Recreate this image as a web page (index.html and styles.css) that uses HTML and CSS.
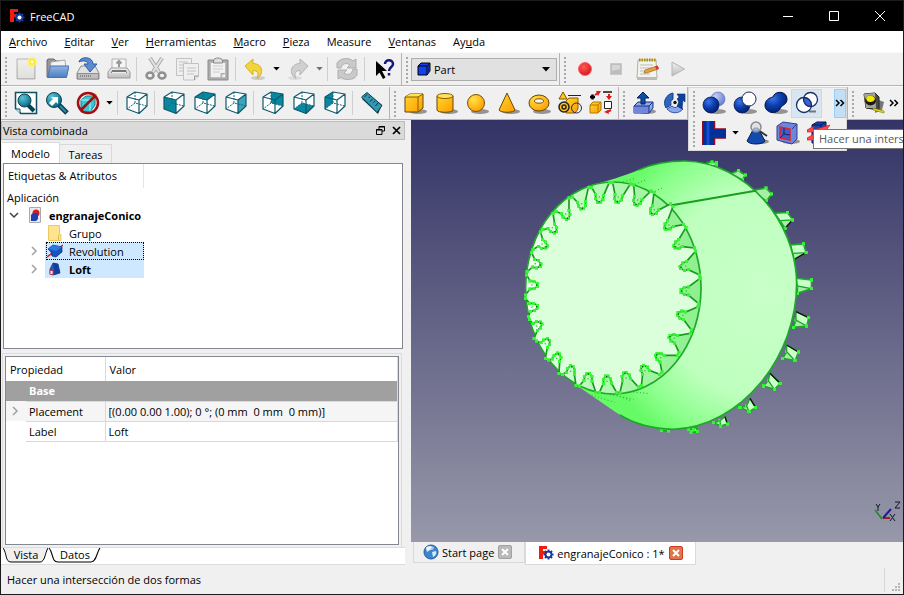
FILE: index.html
```html
<!DOCTYPE html>
<html lang="es">

<head>
    <meta charset="UTF-8">
    <meta name="viewport" content="width=device-width, initial-scale=1.0">
    <title>FreeCAD</title>
    <link rel="stylesheet" href="styles.css">
</head>

<body>

    <!-- shared icon shapes and gradients -->
    <svg class="defs" width="0" height="0" aria-hidden="true">
        <defs>
            <radialGradient id="blue-ball" cx="35%" cy="30%" r="75%">
                <stop offset="0" stop-color="#3f74ea"/><stop offset="0.5" stop-color="#0b3fae"/><stop offset="1" stop-color="#001c6c"/>
            </radialGradient>
            <radialGradient id="pale-ball" cx="35%" cy="30%" r="75%">
                <stop offset="0" stop-color="#c3d0f8"/><stop offset="1" stop-color="#6478cc"/>
            </radialGradient>
            <radialGradient id="gold-ball" cx="35%" cy="30%" r="75%">
                <stop offset="0" stop-color="#ffe14a"/><stop offset="1" stop-color="#ff9f00"/>
            </radialGradient>
            <radialGradient id="teal-ball" cx="35%" cy="30%" r="75%">
                <stop offset="0" stop-color="#5cc4dc"/><stop offset="1" stop-color="#04667e"/>
            </radialGradient>
            <radialGradient id="red-ball" cx="40%" cy="35%" r="70%">
                <stop offset="0" stop-color="#ff5a5a"/><stop offset="1" stop-color="#d80f18"/>
            </radialGradient>
            <linearGradient id="gold" x1="0" x2="1" y1="0" y2="1">
                <stop offset="0" stop-color="#ffd52e"/><stop offset="1" stop-color="#ff9d00"/>
            </linearGradient>
            <linearGradient id="grey" x1="0" x2="0" y1="0" y2="1">
                <stop offset="0" stop-color="#f2f2f2"/><stop offset="1" stop-color="#bcbcbc"/>
            </linearGradient>
            <linearGradient id="folder" x1="0" x2="0" y1="0" y2="1">
                <stop offset="0" stop-color="#8fb4e2"/><stop offset="1" stop-color="#4d7fc0"/>
            </linearGradient>
            <symbol id="logo" viewBox="0 0 16 16">
                <path d="M1 1h8v3H5v2h3v3H5v5H1z" fill="#f01c10"/>
                <g fill="#16399c"><circle cx="10.5" cy="9.500" r="3.8"/><path d="M9.500 4.500h2v10h-2zM5.500 8.500h10v2h-10z"/><path d="M9.500 4.500h2v10h-2zM5.500 8.500h10v2h-10z" transform="rotate(45 10.500 9.500)"/></g>
                <circle class="hub" cx="10.500" cy="9.500" r="2"/>
            </symbol>
            <symbol id="wire" viewBox="0 0 24 24">
                <path d="M10 1v11l12 3M10 12L2 18" fill="none" stroke="#17697b" stroke-dasharray="2 1"/>
                <path d="M2 6l12 3v13.500L2 18zM2 6l8-5 12 2-8 6M22 3v12l-8 7.500" fill="none" stroke="#0c5a6c" stroke-width="1.200" stroke-linejoin="round"/>
            </symbol>
            <symbol id="arrow" viewBox="0 0 8 5"><path d="M0 0h8L4 4.500z"/></symbol>
            <symbol id="more" viewBox="0 0 10 8"><path d="M1 1l3 3-3 3M5.500 1l3 3-3 3" fill="none" stroke="#000" stroke-width="1.500"/></symbol>
            <symbol id="shade" viewBox="0 0 24 24"><ellipse cx="15" cy="20.500" rx="9" ry="2.500" fill="#555" opacity="0.6"/></symbol>
        </defs>
    </svg>

    <div class="window">
        <header class="titlebar">
            <svg class="app-logo"><use href="#logo"/></svg>
            <h1 class="app-name">FreeCAD</h1>
            <button class="win-btn" aria-label="Minimizar"><svg viewBox="0 0 10 10"><path d="M0 5.500h10"/></svg></button>
            <button class="win-btn" aria-label="Maximizar"><svg viewBox="0 0 10 10"><path d="M.5.500h9v9h-9z"/></svg></button>
            <button class="win-btn" aria-label="Cerrar"><svg viewBox="0 0 10 10"><path d="M0 0l10 10M10 0L0 10"/></svg></button>
        </header>

        <nav class="menubar">
            <a href="#"><u>A</u>rchivo</a>
            <a href="#"><u>E</u>ditar</a>
            <a href="#"><u>V</u>er</a>
            <a href="#"><u>H</u>erramientas</a>
            <a href="#"><u>M</u>acro</a>
            <a href="#"><u>P</u>ieza</a>
            <a href="#">Measure</a>
            <a href="#"><u>V</u>entanas</a>
            <a href="#">Ay<u>u</u>da</a>
        </nav>

        <!-- file, workbench and macro toolbars -->
        <div class="toolbar-row">
            <div class="toolbar">
                <span class="handle"></span>
                <button class="tool" aria-label="Nuevo"><svg viewBox="0 0 24 24"><path d="M3 2h18v20H3z" fill="url(#grey)" stroke="#b5b5b0"/><path d="M4 3h16v18H4z" fill="#eeeeea" opacity=".7"/><circle cx="18" cy="5" r="5" fill="#fff36a" opacity=".7"/><circle cx="18" cy="5" r="3" fill="#ffee20"/><circle cx="18" cy="5" r="1.300" fill="#fff"/></svg></button>
                <button class="tool" aria-label="Abrir"><svg viewBox="0 0 24 24"><path d="M2 20V3l1-1h6l2 2h8v16z" fill="#969696" stroke="#6e6e6e"/><path d="M6 5l14-2 1 9H5z" fill="#f3f3f3" stroke="#aaa"/><path d="M5.500 9H24l-2.500 11.500H2.500z" fill="url(#folder)" stroke="#4473b2"/></svg></button>
                <button class="tool" aria-label="Guardar"><svg viewBox="0 0 24 24"><path d="M5 9h14l4 7v6H1v-6z" fill="#e2e2e2" stroke="#8d8d8d"/><path d="M1.500 16.500h21v5.500h-21z" fill="#bfbfbf" stroke="#8d8d8d"/><path d="M4 19h12" stroke="#888" stroke-width="2" stroke-dasharray="1 1"/><path d="M3 5c1-6 14-6 14 2h4l-7 8-6-8h4c0-3-5-4-9-2z" fill="#5b8bd0" stroke="#33609f"/></svg></button>
                <button class="tool" aria-label="Imprimir"><svg viewBox="0 0 24 24"><path d="M5 12V2h14v10z" fill="#f5f5f5" stroke="#b2b2b2"/><path d="M12 4v6M9.500 6.500L12 4l2.500 2.500" fill="none" stroke="#999" stroke-width="2"/><path d="M4 11h16l3 4v6H1v-6z" fill="url(#grey)" stroke="#999"/><path d="M5 13h14l1 3H4z" fill="#777"/><path d="M5 15.500h14" stroke="#eee"/></svg></button>
                <span class="sep"></span>
                <button class="tool" aria-label="Cortar"><svg viewBox="0 0 24 24"><path d="M6 1l9 14M18 1L9 15" stroke="#aaa" stroke-width="4"/><path d="M6 1l9 14M18 1L9 15" stroke="#e2e2e2" stroke-width="2"/><g fill="none" stroke="#8f8f8f" stroke-width="2.500"><ellipse cx="6" cy="18.500" rx="3.500" ry="3"/><ellipse cx="18" cy="18.500" rx="3.500" ry="3"/></g></svg></button>
                <button class="tool" aria-label="Copiar"><svg viewBox="0 0 24 24"><g fill="#efefef" stroke="#c2c2c2"><path d="M1.500 1.500h15v17h-15z"/><path d="M4 5h9M4 8h4M4 11h4M4 14h4"/><path d="M8.500 6.500h15V19l-4 4h-11z"/><path d="M12 11h9M12 14h9M12 17h7"/></g><path d="M19.500 23v-4h4" fill="#ddd" stroke="#999"/></svg></button>
                <button class="tool" aria-label="Pegar"><svg viewBox="0 0 24 24"><path d="M2 3h20v20H2z" fill="#aaa" stroke="#8c8c8c"/><path d="M4.500 5.500h15v15h-15z" fill="#f1f1f1" stroke="#bbb"/><path d="M7 9h10M7 12h10M7 15h7" stroke="#ccc"/><path d="M7.500 4c0-4 9-4 9 0v2h-9z" fill="#ddd" stroke="#888"/><path d="M15 20.500v-4h4" fill="#ccc" stroke="#aaa"/></svg></button>
                <span class="sep"></span>
                <button class="tool" aria-label="Deshacer"><svg viewBox="0 0 24 24"><ellipse cx="15" cy="21" rx="7" ry="2" fill="#ccc"/><path d="M2 9l8-7v4.500c9 0 12 10 4 15 2-5 1-8-4-8V18z" fill="#f3d43c" stroke="#d6b21a"/></svg></button>
                <button class="drop" aria-label="Lista de deshacer"><svg><use href="#arrow"/></svg></button>
                <button class="tool" aria-label="Rehacer"><svg viewBox="0 0 24 24"><ellipse cx="9" cy="21" rx="7" ry="2" fill="#ddd"/><path d="M22 9l-8-7v4.500c-9 0-12 10-4 15-2-5-1-8 4-8V18z" fill="#d0d0d0" stroke="#b4b4b4"/></svg></button>
                <button class="drop off" aria-label="Lista de rehacer"><svg><use href="#arrow"/></svg></button>
                <span class="sep"></span>
                <button class="tool" aria-label="Refrescar"><svg viewBox="0 0 24 24"><ellipse cx="12" cy="21.500" rx="9" ry="1.500" fill="#ddd"/><path d="M2 11V6c3-5 12-6 16-2l3-2v9h-9l3-3c-4-3-8-1-9 3zM22 12v6c-3 5-12 6-16 2l-3 2v-9h9l-3 3c4 3 8 1 9-4z" fill="#cacaca" stroke="#afafaf"/></svg></button>
                <span class="sep"></span>
                <button class="tool" aria-label="¿Qué es esto?"><svg viewBox="0 0 24 24"><path d="M4 4v15l3.500-3.500L11 22l2.500-1.500L10 14h5z"/><path d="M13 7c0-5 8-5 8 0 0 3-4 3-4 7M17 16v2.500" fill="none" stroke="#15157f" stroke-width="2.500"/></svg></button>
            </div>
            <div class="toolbar">
                <span class="handle"></span>
                <label class="workbench">
                    <svg viewBox="0 0 14 14"><path d="M1 4l3-3h9v8l-3 4H1z" fill="#1540f0" stroke="#000"/><path d="M1 4h9v9M10 4l3-3" fill="none" stroke="#000"/><path d="M10 4l3-3v8l-3 4z" fill="#0a249c"/></svg>
                    <select aria-label="Banco de trabajo"><option>Part</option><option>Draft</option></select>
                    <svg class="caret"><use href="#arrow"/></svg>
                </label>
            </div>
            <div class="toolbar wide">
                <span class="handle"></span>
                <button class="tool" aria-label="Grabar macro"><svg viewBox="0 0 24 24"><circle cx="12" cy="12" r="6.500" fill="url(#red-ball)" stroke="#f66"/></svg></button>
                <button class="tool" aria-label="Detener macro"><svg viewBox="0 0 24 24"><path d="M6.500 6.500h11v11h-11z" fill="#bdbdbd" stroke="#c8c8c8"/><path d="M8 8h8v4l-8 2z" fill="#d6d6d6"/></svg></button>
                <button class="tool" aria-label="Macros"><svg viewBox="0 0 24 24"><path d="M3 3h18l1 18H2z" fill="#f4f4ee" stroke="#b0b0a4"/><path d="M2 20h20v3H2z" fill="#bbb"/><path d="M4 3h17" stroke="#a58f12" stroke-width="3" stroke-dasharray="1.500 1"/><path d="M5 8h13M5 11h12M5 14h7M5 17h10" stroke="#bbb"/><path d="M9 16l1-3 12-4 1.500 3-12 4z" fill="#e9a040" stroke="#9d6a20" stroke-width=".7"/><path d="M20 9.500l2.500-1 1.500 3-2.500 1z" fill="#d33"/></svg></button>
                <button class="tool" aria-label="Ejecutar macro"><svg viewBox="0 0 24 24"><path d="M6 5l12.500 7L6 19z" fill="url(#grey)" stroke="#b4b4b4"/></svg></button>
            </div>
        </div>

        <!-- view, solids and part tools -->
        <div class="toolbar-row">
            <div class="toolbar">
                <span class="handle"></span>
                <button class="tool" aria-label="Ajustar todo"><svg viewBox="0 0 24 24"><path d="M1.500 1.500h21v21H7l-5.500-5z" fill="#fff" stroke="#0c5162" stroke-width="1.500"/><path d="M1.500 18H6v4.500" fill="#cde" stroke="#0c5162"/><path d="M14 14l6 6" stroke="#064455" stroke-width="4"/><circle cx="10.500" cy="9.500" r="6.500" fill="url(#teal-ball)" stroke="#064455"/></svg></button>
                <button class="tool" aria-label="Ajustar selección"><svg viewBox="0 0 24 24"><path d="M14 14l8 8" stroke="#064455" stroke-width="5"/><path d="M15 15l6 6" stroke="#2b8ca4" stroke-width="2"/><circle cx="9" cy="9" r="7.500" fill="url(#teal-ball)" stroke="#064455"/><path d="M4 12l4-4-2-2h7v7l-2-2-4 4z" fill="#fff"/></svg></button>
                <button class="tool" aria-label="Estilo de dibujo"><svg viewBox="0 0 24 24"><path d="M5 9l5-4h9v9l-5 7H5z" fill="#38c8d4" stroke="#15808c"/><path d="M5 9h9v12M14 9l5-4" fill="none" stroke="#9ff"/><path d="M16 8l4-5" stroke="#eebb22" stroke-width="3"/><circle cx="12" cy="12" r="10" fill="none" stroke="#a60c14" stroke-width="2.500"/><path d="M19 5L5 19" stroke="#a60c14" stroke-width="2.500"/></svg></button>
                <button class="drop" aria-label="Más estilos"><svg><use href="#arrow"/></svg></button>
                <span class="sep"></span>
                <button class="tool" aria-label="Axonométrica"><svg viewBox="0 0 24 24"><path d="M2 6l8-5 12 2v12l-8 7.500L2 18z" fill="#fff"/><use href="#wire"/></svg></button>
                <span class="sep"></span>
                <button class="tool" aria-label="Frontal"><svg viewBox="0 0 24 24"><path d="M2 6l8-5 12 2v12l-8 7.500L2 18z" fill="#fff"/><path d="M2 6l12 3v13.500L2 18z" fill="#0a87a0"/><use href="#wire"/></svg></button>
                <button class="tool" aria-label="Superior"><svg viewBox="0 0 24 24"><path d="M2 6l8-5 12 2v12l-8 7.500L2 18z" fill="#fff"/><path d="M2 6l8-5 12 2-8 6z" fill="#0a87a0"/><use href="#wire"/></svg></button>
                <button class="tool" aria-label="Derecha"><svg viewBox="0 0 24 24"><path d="M2 6l8-5 12 2v12l-8 7.500L2 18z" fill="#fff"/><path d="M14 9l8-6v12l-8 7.500z" fill="#3aa4ba"/><use href="#wire"/></svg></button>
                <span class="sep"></span>
                <button class="tool" aria-label="Posterior"><svg viewBox="0 0 24 24"><path d="M2 6l8-5 12 2v12l-8 7.500L2 18z" fill="#fff"/><path d="M10 1l12 2v12l-12-3z" fill="#0a87a0"/><use href="#wire"/></svg></button>
                <button class="tool" aria-label="Inferior"><svg viewBox="0 0 24 24"><path d="M2 6l8-5 12 2v12l-8 7.500L2 18z" fill="#fff"/><path d="M2 18l8-6 12 3-8 7.500z" fill="#0a87a0"/><use href="#wire"/></svg></button>
                <button class="tool" aria-label="Izquierda"><svg viewBox="0 0 24 24"><path d="M2 6l8-5 12 2v12l-8 7.500L2 18z" fill="#fff"/><path d="M2 6l8-5v11l-8 6z" fill="#0a87a0"/><use href="#wire"/></svg></button>
                <span class="sep"></span>
                <button class="tool" aria-label="Medir distancia"><svg viewBox="0 0 24 24"><path d="M2 8l5-6 15 12-4 9z" fill="#12313a"/><path d="M1.500 6L7 1.500l15 13-5 7z" fill="#3596b0" stroke="#0d4758"/><path d="M7 3.500L4.500 6M10 5.500L8.500 7M12.500 8L10 10.500M15 10l-1.500 1.500M18 12l-2.500 3" stroke="#06303c"/></svg></button>
            </div>
            <div class="toolbar">
                <span class="handle"></span>
                <button class="tool" aria-label="Cubo"><svg viewBox="0 0 24 24"><use href="#shade"/><path d="M2 6l5-3h13v14l-5 4H2z" fill="url(#gold)" stroke="#6b4700"/><path d="M2 6l5-3h13l-5 3z" fill="#ffe25c"/><path d="M2 6h13v15M15 6l5-3" fill="none" stroke="#8a5c00"/></svg></button>
                <button class="tool" aria-label="Cilindro"><svg viewBox="0 0 24 24"><use href="#shade"/><path d="M3 5v14c0 3 16 3 16 0V5z" fill="url(#gold)" stroke="#6b4700"/><ellipse cx="11" cy="5" rx="8" ry="2.500" fill="#ffe25c" stroke="#8a5c00"/></svg></button>
                <button class="tool" aria-label="Esfera"><svg viewBox="0 0 24 24"><use href="#shade"/><circle cx="11" cy="12" r="8.500" fill="url(#gold-ball)" stroke="#7d5300"/></svg></button>
                <button class="tool" aria-label="Cono"><svg viewBox="0 0 24 24"><use href="#shade"/><path d="M11 2L3 19c1 3 15 3 16 0z" fill="url(#gold)" stroke="#6b4700"/></svg></button>
                <button class="tool" aria-label="Toro"><svg viewBox="0 0 24 24"><use href="#shade"/><ellipse cx="12" cy="12" rx="10" ry="8" fill="url(#gold-ball)" stroke="#6b4700"/><ellipse cx="12" cy="10" rx="4.500" ry="2.200" fill="#f3f3f3" stroke="#7d5300"/></svg></button>
                <button class="tool" aria-label="Crear primitivas"><svg viewBox="0 0 24 24"><path d="M8 10l3-3h9v11l-3 4H8z" fill="url(#gold)" stroke="#8a5c00"/><path d="M5 1L1 8h8z" fill="#ffc61a" stroke="#7d5300"/><path d="M10 4.500h13" stroke="#222"/><circle cx="6" cy="16" r="5" fill="#ffc61a" stroke="#222" stroke-width="1.500"/><circle cx="6" cy="16" r="2" fill="none" stroke="#222" stroke-width="1.500"/><circle cx="18.500" cy="17" r="5" fill="none" stroke="#23235c"/></svg></button>
                <button class="tool" aria-label="Constructor de formas"><svg viewBox="0 0 24 24"><path d="M1 14l3-3h8v8l-3 3H1z" fill="url(#gold)" stroke="#b07a00"/><path d="M1 14h8v8M9 14l3-3" fill="none" stroke="#b07a00"/><path d="M1 6h5M3.500 3.500v5" stroke="#000" stroke-width="2.500"/><path d="M6 4l3-2" stroke="#e01818" stroke-width="2"/><path d="M7 0h5l-3 5z" fill="#e01818"/><path d="M14 1h9" stroke="#111" stroke-width="1.500"/><path d="M20 3v3" stroke="#e01818" stroke-width="2"/><path d="M17 5h6l-3 4z" fill="#e01818"/><path d="M15.500 10.500h7v7h-7z" fill="#fff" stroke="#222"/><path d="M22 19l-4 2" stroke="#e01818" stroke-width="2"/><path d="M15 21l4-2 1 4z" fill="#e01818"/></svg></button>
            </div>
            <div class="toolbar cut">
                <span class="handle"></span>
                <button class="tool" aria-label="Extrusión"><svg viewBox="0 0 24 24"><use href="#shade"/><path d="M2 15l4-4h15v6l-4 5H2z" fill="#90a6ee" stroke="#1a2f86"/><path d="M2 15h15v7H2z" fill="#7088dc"/><path d="M2 15h15v7M17 15l4-4" fill="none" stroke="#1a2f86"/><path d="M11 1l6 6h-4v6H9V7H5z" fill="#0d4ea8" stroke="#03215f"/></svg></button>
                <button class="tool" aria-label="Revolución"><svg viewBox="0 0 24 24"><path d="M10 2A10 10 0 0 0 3 17l5-3a5 5 0 0 1 2-6z" fill="#2f66bd" stroke="#173c86"/><path d="M4 18c4 5 12 5 16 0l-5-3c-2 2-4 2-6 0z" fill="#8aa6ee" stroke="#3452a8"/><path d="M14 3h8v8l-2-2-1 9-5-3c2-3 2-5 0-7l2-2z" fill="#0b419c" stroke="#052a70" stroke-width=".6"/><circle cx="12" cy="11.500" r="1.700" fill="#111"/></svg></button>
            </div>
            <div class="toolbar slot">
                <!-- expanded boolean toolbar, floats above the 3D view -->
                <div class="popup">
                    <div class="popup-row">
                        <span class="handle"></span>
                        <button class="tool" aria-label="Booleana"><svg viewBox="0 0 24 24"><use href="#shade"/><circle cx="16" cy="8" r="7" fill="url(#pale-ball)" stroke="#6575b8" stroke-width=".7"/><circle cx="9" cy="14" r="8" fill="url(#blue-ball)" stroke="#00104a" stroke-width=".7"/></svg></button>
                        <button class="tool" aria-label="Cortar formas"><svg viewBox="0 0 24 24"><use href="#shade"/><circle cx="9" cy="14" r="8" fill="url(#blue-ball)" stroke="#00104a" stroke-width=".7"/><circle cx="16" cy="8" r="7" fill="#fff" stroke="#1c2a66"/></svg></button>
                        <button class="tool" aria-label="Unión"><svg viewBox="0 0 24 24"><use href="#shade"/><path d="M9 6C11-1 23 0 23 8c0 5-4 6-6 8-3 8-15 7-16-1 0-6 4-8 8-9z" fill="url(#blue-ball)" stroke="#00104a"/></svg></button>
                        <button class="tool active" aria-label="Intersección"><svg viewBox="0 0 24 24"><path d="M14 20.500h7" stroke="#777" stroke-width="2"/><circle cx="9" cy="14" r="7.500" fill="#fff"/><circle cx="15.500" cy="8.500" r="7" fill="#fff"/><path d="M8.600 7c4-1 7.500 2 7.700 8C12 16 8 13 8.600 7z" fill="#3365d8"/><circle cx="9" cy="14" r="7.500" fill="none" stroke="#1c2a66" stroke-width="1.300"/><circle cx="15.500" cy="8.500" r="7" fill="none" stroke="#1c2a66" stroke-width="1.300"/></svg></button>
                        <button class="extend on" aria-label="Más herramientas"><svg><use href="#more"/></svg></button>
                    </div>
                    <div class="popup-row">
                        <span class="handle"></span>
                        <button class="tool" aria-label="Unir objetos"><svg viewBox="0 0 24 24"><path d="M0 0h13v8h11v9H13v7H0z" fill="#00309a"/><path d="M6 0v24" stroke="#1450d0" stroke-width="3"/><path d="M.7 0v24M12.500 0v8H24M12.500 24v-7H24" fill="none" stroke="#8c0d24" stroke-width="1.500"/></svg></button>
                        <button class="drop" aria-label="Más uniones"><svg><use href="#arrow"/></svg></button>
                        <button class="tool" aria-label="Comprobar geometría"><svg viewBox="0 0 24 24"><use href="#shade"/><path d="M9 7L2 20c2 4 16 4 18 0L13 7z" fill="#124bb0" stroke="#041f55"/><path d="M13 9l9 6" stroke="#333" stroke-width="2"/><circle cx="11" cy="6" r="5" fill="#d7dde6" fill-opacity=".7" stroke="#8a8a8a" stroke-width="1.500"/></svg></button>
                        <button class="tool" aria-label="Sección"><svg viewBox="0 0 24 24"><use href="#shade"/><path d="M1 5l6-4 14 2v15l-5 5-15-4z" fill="#6b86dc" stroke="#2b3f92"/><path d="M4 6l10 2v11L4 17z" fill="#3d5fc6" stroke="#e8202a" stroke-width="1.500"/><path d="M8 7v6l-4 4M8 13l6 1" fill="none" stroke="#15236b"/><path d="M16 8l5-5" stroke="#2b3f92"/></svg></button>
                        <button class="tool" aria-label="Secciones transversales"><svg viewBox="0 0 24 24"><path d="M5 4l5-3h9v17l-5 4H5z" fill="#1546b4" stroke="#03174d"/><path d="M5 4h9l5-3M14 4v18" fill="none" stroke="#03174d"/><path d="M0 9l7-4-1 4 17-5-5 7H0zM0 17l7-4-1 4 17-5-5 7H0z" fill="#ff4848" stroke="#d01010" stroke-width=".6"/></svg></button>
                    </div>
                    <div class="tooltip" role="tooltip">Hacer una intersección de dos formas</div>
                </div>
            </div>
            <div class="toolbar wide">
                <span class="handle"></span>
                <button class="tool" aria-label="Medir"><svg viewBox="0 0 24 24"><path d="M15 8l8 3-2 8-7 3z" fill="#777"/><path d="M3 3l11-1 4 4v13L5 17z" fill="#4a4a48" stroke="#222"/><path d="M3 3l11-1 1 15-10 0z" fill="#a6a69e"/><ellipse cx="9.500" cy="9.500" rx="5.500" ry="5" fill="#1a1a1a"/><path d="M5 7c2-4 8-3 9 1-1 3-5 4-8 2z" fill="#f5e800"/><path d="M12 17l11 3v2L12 19z" fill="#e7dc20" stroke="#807a00" stroke-width=".6"/></svg></button>
                <button class="extend" aria-label="Más medidas"><svg><use href="#more"/></svg></button>
            </div>
        </div>

        <main class="workspace">
            <section class="dock">
                <div class="dock-title">
                    <h2>Vista combinada</h2>
                    <button class="dock-btn" aria-label="Flotar"><svg viewBox="0 0 9 9"><path d="M3 3V.5h5.500V5H6M.5 3.500H6v5H.5zM3 1h6M0 4h6" fill="none" stroke="#000"/></svg></button>
                    <button class="dock-btn" aria-label="Cerrar panel"><svg viewBox="0 0 9 9"><path d="M1 1l7 7M8 1L1 8" stroke="#000" stroke-width="1.700"/></svg></button>
                </div>
                <div class="dock-tabs">
                    <button class="dock-tab current">Modelo</button>
                    <button class="dock-tab">Tareas</button>
                </div>
                <div class="tree-box">
                    <div class="tree-head">Etiquetas &amp; Atributos</div>
                    <ul class="tree">
                        <li>Aplicación</li>
                        <li class="level-1">
                            <svg class="twist open" viewBox="0 0 10 10"><path d="M1 3l4 4 4-4"/></svg>
                            <svg class="node-icon" viewBox="0 0 14 16"><path d="M1.500.500h11v15h-11z" fill="#e9e9ee" stroke="#a9a9b0"/><circle cx="8" cy="6" r="3.500" fill="#d81c24"/><path d="M3 8l2-2h5v6l-2 2H3z" fill="#1d3fb0"/></svg>
                            <b>engranajeConico</b>
                        </li>
                        <li class="level-2">
                            <span class="twist"></span>
                            <svg class="node-icon" viewBox="0 0 14 16"><path d="M.5.500h11v9h1.500v6H.5z" fill="#ffe38f" stroke="#ecc95e"/><path d="M10.500 15v-5" stroke="#e0b848"/></svg>
                            <span>Grupo</span>
                        </li>
                        <li class="level-2 selected focus">
                            <svg class="twist" viewBox="0 0 10 10"><path d="M3 1l4 4-4 4"/></svg>
                            <svg class="node-icon" viewBox="0 0 16 16"><path d="M0 14L16 2" stroke="#d02030" stroke-width="1.500"/><path d="M1 6l5-4 9 2v5l-6 5-4-1-1-4z" fill="#1553c0" stroke="#082a70" stroke-width=".7"/><path d="M1 6l5-4 9 2-6 4z" fill="#2f77dd"/></svg>
                            <span>Revolution</span>
                        </li>
                        <li class="level-2 selected">
                            <svg class="twist" viewBox="0 0 10 10"><path d="M3 1l4 4-4 4"/></svg>
                            <svg class="node-icon" viewBox="0 0 16 16"><path d="M3 8l3-6 5 1 2 9-7 2-3-1z" fill="#2459c4" stroke="#0c2c7a" stroke-width=".7"/><path d="M6 2l1 6v6l6-2-2-9z" fill="#123e9e"/><path d="M3 9.500h3v4H3z" fill="#dfe4f5" stroke="#c22838" stroke-width=".8"/></svg>
                            <b>Loft</b>
                        </li>
                    </ul>
                </div>
                <div class="props-pane">
                    <div class="props-box">
                        <table class="props">
                            <colgroup><col class="gutter-col"><col class="name-col"><col></colgroup>
                            <thead>
                                <tr><th colspan="2" scope="col">Propiedad</th><th scope="col">Valor</th></tr>
                            </thead>
                            <tbody>
                                <tr class="group"><td class="gutter"></td><th colspan="2">Base</th></tr>
                                <tr class="odd"><td class="gutter"><svg class="twist" viewBox="0 0 10 10"><path d="M3 1l4 4-4 4"/></svg></td><td>Placement</td><td>[(0.00 0.00 1.00); 0 °; (0 mm&nbsp; 0 mm&nbsp; 0 mm)]</td></tr>
                                <tr><td class="gutter"></td><td>Label</td><td>Loft</td></tr>
                            </tbody>
                        </table>
                    </div>
                </div>
                <div class="props-tabs">
                    <button class="slant"><svg viewBox="0 0 46 15" preserveAspectRatio="none"><path d="M0 0c4 5 2 14 8 14h29c5 0 5-9 8-14"/></svg><span>Vista</span></button>
                    <button class="slant current"><svg viewBox="0 0 46 15" preserveAspectRatio="none"><path d="M0 0c4 5 2 14 8 14h29c5 0 5-9 8-14"/></svg><span>Datos</span></button>
                </div>
            </section>

            <section class="viewer">
                <div class="view3d">
                    <svg id="gear" class="gear" viewBox="0 0 930 870" role="img" aria-label="Engranaje cónico">
                        <defs>
                            <radialGradient id="skin" gradientUnits="userSpaceOnUse" cx="760" cy="430" r="520">
                                <stop offset="0" stop-color="#c9ffc9"/><stop offset="0.6" stop-color="#beffbe"/><stop offset="0.85" stop-color="#8cff8c"/><stop offset="1" stop-color="#66fa66"/>
                            </radialGradient>
                            <linearGradient id="groove" x1="0" x2="1" y1="0" y2="0">
                                <stop offset="0" stop-color="#f4fff4"/><stop offset="0.4" stop-color="#b5f8b5"/><stop offset="1" stop-color="#8cf08c"/>
                            </linearGradient>
                            <marker id="dot" viewBox="0 0 8 8" refX="4" refY="4" markerWidth="10" markerHeight="10" markerUnits="userSpaceOnUse"><path d="M0 0h8v8H0z" fill="#35f535"/></marker>
                        </defs>
                        <g id="outer-teeth"></g>
                        <path d="M235 107C290 95 350 75 385 60C430 40 480 33 525 33C709 37 858 215 860 400C860 620 695 830 490 838C400 835 340 805 300 775L203 708z" fill="url(#skin)"/>
                        <path d="M385 60C430 40 480 33 525 33C709 37 858 215 860 400C860 620 695 830 490 838C420 836 370 820 330 795" fill="none" stroke="#1ea82a" stroke-width="5"/>
                        <path d="M485 166L737 122" stroke="#16a01e" stroke-width="6"/>
                        <path d="M330 98l42-12M375 103l32-14M435 124l26-12M245 735l68 22M300 734l70 14M360 725l60 6M320 735l40 16" stroke="#22b02c" stroke-width="3" stroke-dasharray="3 7"/>
                        <ellipse cx="310" cy="414" rx="263" ry="318" fill="url(#groove)" stroke="#1ea82a" stroke-width="5"/>
                        <g id="face"></g>
                    </svg>
                    <svg class="axes" viewBox="0 0 30 24" aria-hidden="true">
                        <g fill="none" stroke-width="1.500"><path d="M8 17l7 0" stroke="#a02020" stroke-width="2" transform="translate(4 0)"/><path d="M11 18L4 9" stroke="#1f8a2a"/><path d="M12 17L20 8" stroke="#1d1d96" stroke-width="2"/></g>
                        <g fill="none" stroke="#15152a"><path d="M5 3l2 3 2-3M7 6v4M24 1h5l-5 6h5M19 13l5 7M24 13l-5 7"/></g>
                    </svg>
                </div>
                <div class="doc-tabs">
                    <div class="doc-tab">
                        <svg class="doc-icon" viewBox="0 0 16 16"><circle cx="8" cy="8" r="7" fill="#3f86cf" stroke="#23599a"/><path d="M3 4c2-2 5-2 6-1L7 6 4 8zM9 8l4-1c1 3-1 5-3 6z" fill="#d8ecfb"/><ellipse cx="7" cy="4" rx="4" ry="2" fill="#fff" opacity=".5"/></svg>
                        <a href="#">Start page</a>
                        <button class="close" aria-label="Cerrar Start page"><svg viewBox="0 0 8 8"><path d="M1 1l6 6M7 1L1 7"/></svg></button>
                    </div>
                    <div class="doc-tab current">
                        <svg class="doc-icon"><use href="#logo"/></svg>
                        <a href="#">engranajeConico : 1*</a>
                        <button class="close" aria-label="Cerrar engranajeConico"><svg viewBox="0 0 8 8"><path d="M1 1l6 6M7 1L1 7"/></svg></button>
                    </div>
                </div>
            </section>
        </main>

        <footer class="statusbar">
            <span>Hacer una intersección de dos formas</span>
            <span class="status-sep"></span>
            <svg class="grip" viewBox="0 0 9 9"><path d="M6 0h2v2H6zM3 3h2v2H3zM6 3h2v2H6zM0 6h2v2H0zM3 6h2v2H3zM6 6h2v2H6z" fill="#b5b5b5"/></svg>
        </footer>
    </div>

    <script src="gear.js"></script>
</body>

</html>
```
FILE: styles.css
```css
* {
    margin: 0;
    padding: 0;
    box-sizing: border-box;
}

body {
    font-family: "Open Sans", "Noto Sans", sans-serif;
    font-size: 11px;
    color: #000;
    background-color: #f0f0f0;
}

button {
    font: inherit;
    color: inherit;
    background: none;
    border: none;
}

svg {
    display: block;
    flex-shrink: 0;
}

a {
    color: inherit;
    text-decoration: none;
}

.defs {
    position: absolute;
}

.hub {
    fill: #fff;
}

.window {
    display: flex;
    flex-direction: column;
    height: 100vh;
    border: 1px solid #1b1b1b;
    overflow: hidden;
}

/* title bar */
.titlebar {
    display: flex;
    align-items: center;
    height: 30px;
    padding-left: 8px;
    background-color: #000;
    color: #fff;
}

.titlebar .hub {
    fill: #000;
}

.app-logo {
    width: 16px;
    height: 16px;
    margin-right: 5px;
}

.app-name {
    flex: 1;
    font-size: 11px;
    font-weight: normal;
}

.win-btn {
    display: flex;
    align-items: center;
    justify-content: center;
    width: 46px;
    height: 30px;
}

.win-btn svg {
    width: 10px;
    height: 10px;
    fill: none;
    stroke: #fff;
}

.menubar {
    display: flex;
    align-items: center;
    gap: 17px;
    height: 21px;
    padding-left: 8px;
    background-color: #fff;
}

/* toolbars */
.toolbar-row {
    display: flex;
    height: 34px;
    border-top: 1px solid #fafafa;
    border-bottom: 1px solid #b4b4b4;
}

.toolbar {
    display: flex;
    align-items: center;
    padding-right: 2px;
    border-right: 1px solid #b4b4b4;
}

.toolbar.wide {
    flex: 1;
    border-right: none;
    padding-right: 0;
}

.toolbar.cut {
    width: 69px;
}

.toolbar.slot {
    position: relative;
    align-items: flex-start;
    width: 160px;
    padding: 0;
}

.handle {
    flex-shrink: 0;
    width: 4px;
    height: 27px;
    margin: 0 2px 0 3px;
    background-image: radial-gradient(circle, #a8a8a8 1px, transparent 1px);
    background-size: 4px 4px;
}

.tool {
    display: flex;
    align-items: center;
    justify-content: center;
    flex-shrink: 0;
    width: 31px;
    height: 29px;
}

.tool svg {
    width: 24px;
    height: 24px;
}

.tool.active {
    background-color: #d8e6f2;
    outline: 1px solid #c0dcf3;
    outline-offset: -1px;
}

.drop {
    display: flex;
    align-items: center;
    justify-content: center;
    flex-shrink: 0;
    width: 12px;
    height: 29px;
}

.drop svg {
    width: 7px;
    height: 4px;
}

.drop.off svg {
    fill: #707070;
}

.sep {
    width: 1px;
    height: 24px;
    margin: 0 3px 0 2px;
    background-color: #cfcfcf;
}

.extend {
    display: flex;
    align-items: center;
    justify-content: center;
    width: 12px;
    height: 29px;
}

.extend svg {
    width: 10px;
    height: 8px;
}

.extend.on {
    margin-left: auto;
    background-color: #c2dff5;
    outline: 1px solid #99cdf5;
    outline-offset: -1px;
}

.workbench {
    display: flex;
    align-items: center;
    width: 146px;
    height: 23px;
    padding: 0 6px 0 5px;
    background-color: #e1e1e1;
    border: 1px solid #adadad;
}

.workbench svg {
    width: 14px;
    height: 14px;
}

.workbench select {
    flex: 1;
    padding-left: 3px;
    font: inherit;
    appearance: none;
    background: none;
    border: none;
    outline: none;
}

.workbench .caret {
    width: 8px;
    height: 5px;
}

.popup {
    position: absolute;
    top: 0;
    left: 0;
    right: 0;
    z-index: 5;
    padding-bottom: 2px;
    background-color: #f0f0f0;
    border: 1px solid #d8d8d8;
}

.popup-row {
    display: flex;
    align-items: center;
    height: 30px;
}

.tooltip {
    position: absolute;
    top: 41px;
    left: 124px;
    height: 20px;
    padding: 0 5px;
    line-height: 18px;
    color: #575757;
    white-space: nowrap;
    background-color: #fff;
    border: 1px solid #767676;
}

/* main area */
.workspace {
    display: flex;
    flex: 1;
    gap: 6px;
    min-height: 0;
}

.dock {
    display: flex;
    flex-direction: column;
    flex: 0 0 404px;
    padding-top: 1px;
}

.dock-title {
    display: flex;
    align-items: center;
    gap: 7px;
    flex-shrink: 0;
    height: 19px;
    padding: 0 3px 0 1px;
    background-color: #dadada;
    border: 1px solid #bdbdbd;
}

.dock-title h2 {
    flex: 1;
    font-size: 11px;
    font-weight: normal;
}

.dock-btn svg {
    width: 9px;
    height: 9px;
}

.dock-tabs {
    display: flex;
    align-items: flex-end;
    flex-shrink: 0;
    height: 23px;
    padding-left: 1px;
}

.dock-tab {
    min-width: 52px;
    height: 19px;
    padding: 0 8px;
    border: 1px solid #d9d9d9;
    border-left: none;
    border-bottom: none;
}

.dock-tab.current {
    min-width: 58px;
    height: 21px;
    background-color: #fff;
}

.tree-box {
    flex: 1;
    margin: 0 2px 0 2px;
    background-color: #fff;
    border: 1px solid #828790;
}

.tree-head {
    width: 140px;
    height: 24px;
    padding-left: 4px;
    line-height: 24px;
    border-right: 1px solid #e5e5e5;
}

.tree {
    list-style: none;
}

.tree li {
    display: flex;
    align-items: center;
    height: 18px;
    padding-left: 3px;
}

.tree .level-1 {
    padding-left: 5px;
}

.tree .level-2 {
    padding-left: 25px;
}

.tree .node-icon {
    width: 16px;
    height: 16px;
    margin: 0 6px 0 8px;
}

.tree .selected {
    width: 140px;
    background: linear-gradient(#cde8ff, #cde8ff) 41px 0 no-repeat;
}

.tree .focus {
    position: relative;
}

.tree .focus::after {
    content: "";
    position: absolute;
    inset: 0 0 0 42px;
    border: 1px dotted #000;
}

.twist {
    width: 10px;
    height: 10px;
    fill: none;
    stroke: #a0a0a0;
    stroke-width: 1.5px;
}

.twist.open {
    stroke: #404040;
}

.props-pane {
    flex: 0 0 194px;
    margin: 4px 3px 0 1px;
    padding: 2px 2px 2px;
    border: 1px solid #dcdcdc;
    border-bottom: none;
}

.props-box {
    height: 100%;
    background-color: #fff;
    border: 1px solid #828790;
}

.props {
    width: 100%;
    table-layout: fixed;
    border-collapse: collapse;
}

.gutter-col {
    width: 20px;
}

.name-col {
    width: 79px;
}

.props th,
.props td {
    height: 20px;
    padding-left: 3px;
    font-weight: normal;
    text-align: left;
    white-space: nowrap;
    border-right: 1px solid #d9d9d9;
    border-bottom: 1px solid #d9d9d9;
}

.props thead th {
    height: 24px;
    padding-left: 4px;
    border-bottom: none;
}

.props td.gutter {
    padding-left: 4px;
    border: none;
}

.props .group {
    color: #fff;
    background-color: #a0a0a0;
}

.props .group th {
    font-weight: bold;
}

.props .odd {
    background-color: #f5f5f5;
}

.props-tabs {
    display: flex;
    flex-shrink: 0;
    height: 18px;
    padding-left: 2px;
    background-color: #fff;
    border-top: 1px solid #dcdcdc;
    border-bottom: 1px solid #dcdcdc;
}

.slant {
    display: grid;
    width: 46px;
    height: 15px;
    line-height: 13px;
}

.slant.current {
    width: 52px;
}

.slant svg,
.slant span {
    grid-area: 1 / 1;
}

.slant svg {
    width: 100%;
    height: 15px;
    fill: #f0f0f0;
    stroke: #000;
}

.slant.current svg {
    fill: #fff;
}

/* 3D view */
.viewer {
    display: flex;
    flex-direction: column;
    flex: 1;
    min-width: 0;
}

.view3d {
    position: relative;
    flex: 1;
    background: linear-gradient(#333366, #9898aa);
}

.gear {
    position: absolute;
    top: 30px;
    left: 99px;
    width: 310px;
    height: 290px;
}

.axes {
    position: absolute;
    right: 2px;
    bottom: 17px;
    width: 30px;
    height: 24px;
}

.doc-tabs {
    display: flex;
    align-items: flex-start;
    height: 23px;
    padding-left: 2px;
}

.doc-tab {
    display: flex;
    align-items: center;
    gap: 3px;
    height: 21px;
    padding: 0 12px 0 9px;
    border: 1px solid #d9d9d9;
    border-top: none;
}

.doc-tab.current {
    height: 23px;
    padding: 0 12px;
    background-color: #fff;
}

.doc-icon {
    width: 16px;
    height: 16px;
}

.close {
    display: flex;
    align-items: center;
    justify-content: center;
    width: 14px;
    height: 14px;
    margin-left: 1px;
    background-color: #b9b9b9;
    border: 1px solid #a2a2a2;
    border-radius: 2px;
}

.close svg {
    width: 8px;
    height: 8px;
    stroke: #fff;
    stroke-width: 2px;
}

.doc-tab.current .close {
    background-color: #e0744c;
    border-color: #cc3d22;
}

.statusbar {
    display: flex;
    align-items: center;
    height: 29px;
    padding-left: 6px;
}

.status-sep {
    width: 1px;
    height: 24px;
    margin-left: auto;
    margin-right: 7px;
    background-color: #d7d7d7;
}

.grip {
    align-self: flex-end;
    width: 9px;
    height: 9px;
    margin: 0 2px 2px 0;
}
```
FILE: gear.js
```js
// outer points of the front face and the bottom of the groove that follows each one
const tips = [[303, 97], [366, 103], [428, 125], [485, 165], [525, 228], [556, 298], [570, 380], [565, 465], [543, 545],
    [505, 612], [453, 670], [390, 710], [325, 728], [263, 728], [203, 708], [152, 672], [110, 628], [75, 570],
    [55, 505], [46, 440], [50, 370], [66, 303], [95, 242], [133, 187], [182, 142], [240, 112]];
const bottoms = [[322, 155], [378, 163], [425, 190], [467, 235], [495, 290], [513, 352], [515, 423], [505, 492], [480, 560],
    [440, 615], [398, 650], [345, 670], [290, 680], [235, 672], [185, 650], [145, 612], [115, 570], [92, 520],
    [80, 470], [80, 405], [90, 345], [108, 290], [135, 245], [172, 205], [217, 175], [267, 155]];

// teeth that stick out behind the big end
const outer = [
    '592,38 606,36 620,38 620,46 600,50', '660,72 685,62 706,75 698,88 670,84', '735,120 768,114 785,132 770,152 745,140',
    '795,190 832,188 848,210 825,235 810,212', '842,285 880,282 888,308 850,330 848,310', '858,385 904,390 904,416 862,430 862,408',
    '858,485 896,503 890,528 850,532 858,510', '830,585 865,606 855,632 818,625 830,605', '780,670 810,700 793,718 760,708 775,692',
    '720,745 737,773 717,785 690,772 710,768', '645,800 652,822 632,828 610,818 630,812', '560,830 562,845 543,848 535,838 550,838',
    '480,832 475,843 455,841 460,836'
];

function shape(tag, attrs) {
    const el = document.createElementNS('http://www.w3.org/2000/svg', tag);
    for (const key in attrs) el.setAttribute(key, attrs[key]);
    return el;
}

const teeth = document.getElementById('outer-teeth');
outer.forEach((points, i) => {
    const p = points.split(' ');
    teeth.appendChild(shape('polygon', {
        points, fill: '#a6f0a6', stroke: '#1ea82a', 'stroke-width': 5,
        'marker-mid': 'url(#dot)'
    }));
    if (i > 2 && i < 11) {
        // lit top of the tooth and the hidden edge in black
        teeth.appendChild(shape('polygon', { points: [p[0], p[1], p[2], p[4]].join(' '), fill: '#c9ffc9', stroke: '#1ea82a', 'stroke-width': 4 }));
        const edge = i < 5 ? [p[2], p[3]] : [p[0], p[1]];
        if (i !== 5) teeth.appendChild(shape('polyline', { points: edge.join(' '), stroke: '#111', 'stroke-width': 4 }));
        teeth.appendChild(shape('polyline', { points: points, fill: 'none', 'marker-mid': 'url(#dot)' }));
    }
});

const outline = [];
const face = document.getElementById('face');
const marks = [];
tips.forEach((tip, i) => {
    const next = tips[(i + 1) % tips.length];
    const b = bottoms[i];
    const mx = (tip[0] + next[0]) / 2 - b[0];
    const my = (tip[1] + next[1]) / 2 - b[1];
    const len = Math.hypot(mx, my);
    const ux = mx / len, uy = my / len;
    // along the rim, from this tip to the next one
    const tx = -uy, ty = ux;
    const at = (along, out) => [b[0] + tx * along + ux * out, b[1] + ty * along + uy * out].map(Math.round);
    const curve = [at(-12, 20), at(-11, 8), at(-4, -2), at(4, -2), at(11, 8), at(12, 20)];
    const end = [next[0] - tx * 5, next[1] - ty * 5].map(Math.round);
    const start = [tip[0] + tx * 5, tip[1] + ty * 5].map(Math.round);
    outline.push(start, ...curve, end);
    marks.push(b, at(0, 14));
});
face.appendChild(shape('polygon', {
    points: outline.join(' '), fill: '#dbffdb', stroke: '#18991f', 'stroke-width': 5,
    'marker-mid': 'url(#dot)', 'marker-start': 'url(#dot)'
}));
marks.forEach((m, i) => {
    face.appendChild(shape('rect', { x: m[0] - 2, y: m[1] - 2, width: 4, height: 4, fill: i % 2 ? '#2ad42a' : '#0b5a10' }));
});
```
